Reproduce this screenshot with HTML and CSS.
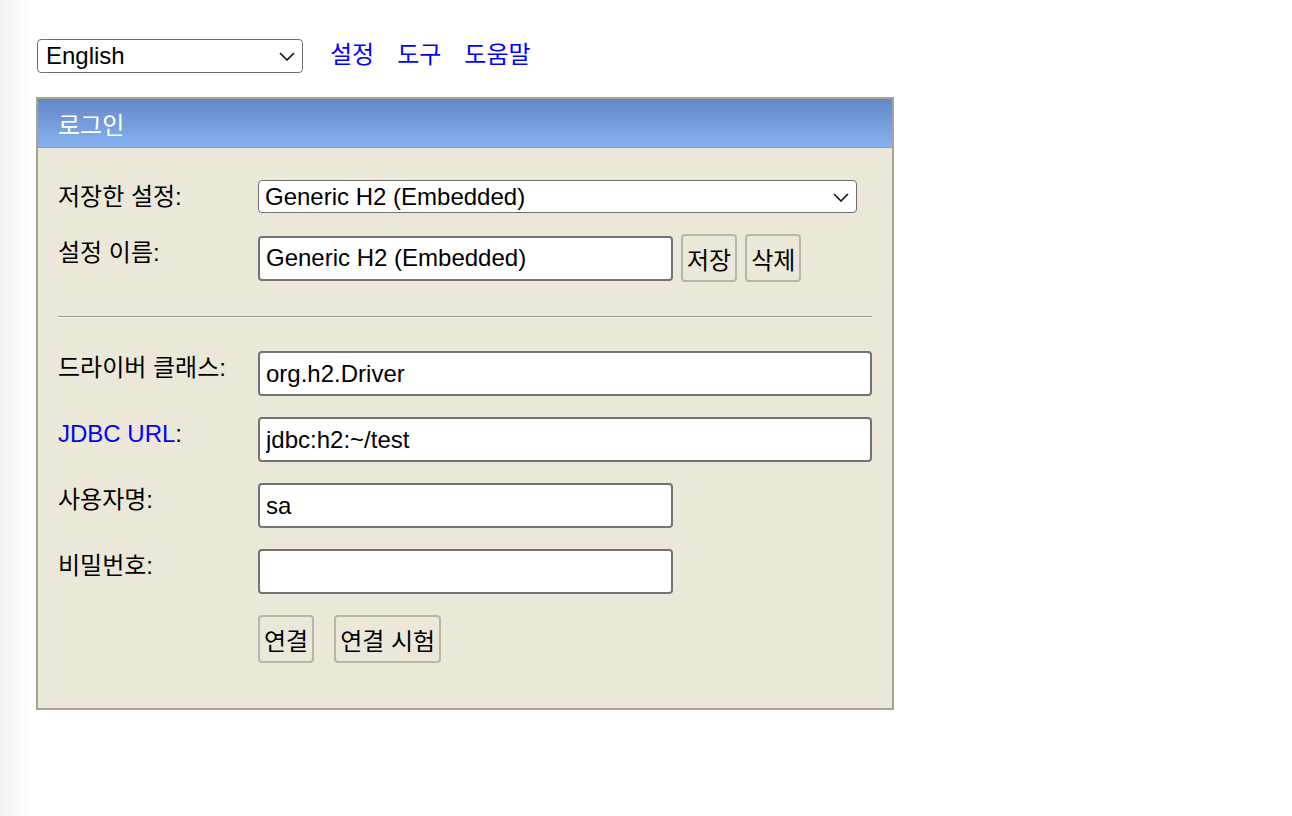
FILE: index.html
```html
<!DOCTYPE html>
<html lang="ko">
<head>
<meta charset="utf-8">
<title>H2 Console</title>
<link rel="stylesheet" href="styles.css">
</head>
<body>
<div class="page">
  <div class="topbar">
    <div class="select-wrap lang">
      <select class="select"><option>English</option></select>
      <svg class="chev" width="16" height="9" viewBox="0 0 16 9"><path d="M1 1l7 7 7-7" fill="none" stroke="#111" stroke-width="1.6"/></svg>
    </div>
    <a class="link" href="#">설정</a>
    <a class="link" href="#">도구</a>
    <a class="link" href="#">도움말</a>
  </div>

  <div class="panel">
    <div class="panel-head">로그인</div>
    <div class="panel-body">
      <div class="label">저장한 설정:</div>
      <div class="field">
        <div class="select-wrap setting">
          <select class="select"><option>Generic H2 (Embedded)</option></select>
          <svg class="chev" width="16" height="9" viewBox="0 0 16 9"><path d="M1 1l7 7 7-7" fill="none" stroke="#111" stroke-width="1.6"/></svg>
        </div>
      </div>

      <div class="label l2">설정 이름:</div>
      <div class="field inline">
        <input class="input narrow" type="text" value="Generic H2 (Embedded)">
        <button class="btn">저장</button>
        <button class="btn">삭제</button>
      </div>

      <div class="divider"></div>

      <div class="label">드라이버 클래스:</div>
      <div class="field"><input class="input wide" type="text" value="org.h2.Driver"></div>

      <div class="label"><a class="link" href="#">JDBC URL</a>:</div>
      <div class="field"><input class="input wide" type="text" value="jdbc:h2:~/test"></div>

      <div class="label">사용자명:</div>
      <div class="field"><input class="input narrow" type="text" value="sa"></div>

      <div class="label">비밀번호:</div>
      <div class="field"><input class="input narrow" type="password" value=""></div>

      <div class="label"></div>
      <div class="field inline actions">
        <button class="btn">연결</button>
        <button class="btn">연결 시험</button>
      </div>
    </div>
  </div>
</div>
</body>
</html>
```

FILE: styles.css
```css
html, body {
  margin: 0;
  padding: 0;
}

body {
  min-height: 816px;
  background: linear-gradient(to right, #f2f2f2 0px, #fbfbfb 20px, #ffffff 34px);
  font-family: "Liberation Sans", "Noto Sans CJK KR", sans-serif;
  font-size: 24px;
  color: #000;
}

.page {
  padding: 39px 0 0 36px;
}

.topbar {
  display: flex;
  align-items: center;
  height: 34px;
}

.select-wrap {
  position: relative;
}

.select {
  appearance: none;
  -webkit-appearance: none;
  box-sizing: border-box;
  width: 100%;
  height: 100%;
  margin: 0;
  padding: 0 30px 0 6px;
  border: 1.5px solid #6f6f6f;
  border-radius: 4px;
  background: #fff;
  font-family: "Liberation Sans", "Noto Sans CJK KR", sans-serif;
  font-size: 24px;
  color: #000;
  line-height: 28px;
}

.chev {
  position: absolute;
  right: 8px;
  top: 50%;
  margin-top: -4px;
  pointer-events: none;
}

.lang {
  margin-left: 1px;
  width: 266px;
  height: 34px;
}

.lang .select {
  padding-left: 8px;
}

.topbar .link {
  margin-left: 27px;
  line-height: 28px;
  margin-top: -3px;
}

.topbar .link + .link {
  margin-left: 23px;
}

.link {
  color: #0000ff;
  text-decoration: none;
}

.panel {
  box-sizing: border-box;
  width: 858px;
  margin-top: 24px;
  border: 2px solid #a7a492;
  background: #ebe8da;
}

.panel-head {
  height: 49px;
  box-sizing: border-box;
  padding: 0 20px;
  display: flex;
  align-items: center;
  color: #fff;
  background: linear-gradient(to bottom, #6487c9 0%, #86b1ee 100%);
  border-bottom: 1px solid #6f9ddd;
}

.panel-body {
  display: grid;
  grid-template-columns: 200px 1fr;
  row-gap: 21px;
  padding: 32px 20px 45px 20px;
}

.label {
  align-self: start;
  padding-top: 3px;
  line-height: 28px;
  white-space: nowrap;
}

.l2 {
  padding-top: 5px;
}

.field {
  display: flex;
  align-items: center;
}

.field.inline {
  gap: 8px;
}

.setting {
  width: 599px;
  height: 33px;
}

.input {
  box-sizing: border-box;
  height: 45px;
  margin: 0;
  padding: 0 6px;
  border: 2px solid #737373;
  border-radius: 4px;
  background: #fff;
  font-family: "Liberation Sans", "Noto Sans CJK KR", sans-serif;
  font-size: 24px;
  color: #000;
  outline: none;
}

.input.wide {
  width: 100%;
}

.input.narrow {
  width: 415px;
}

.btn {
  box-sizing: border-box;
  height: 48px;
  margin: 0;
  padding: 0 4px;
  border: 2px solid #b9b6a8;
  border-radius: 4px;
  background: #ebe8da;
  font-family: "Liberation Sans", "Noto Sans CJK KR", sans-serif;
  font-size: 24px;
  color: #000;
}

.field.actions {
  gap: 20px;
}

.divider {
  grid-column: 1 / -1;
  margin: 13px 0 12px 0;
  height: 0;
  border-top: 1px solid #9b9b9b;
  border-bottom: 1px solid #f7f6f2;
}
```
